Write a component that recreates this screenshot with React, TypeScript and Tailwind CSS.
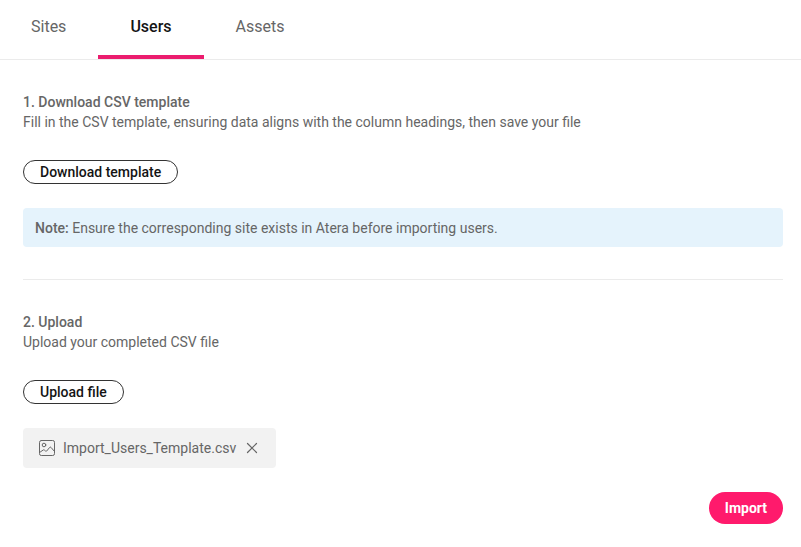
import { useState } from "react";

const TABS = ["Sites", "Users", "Assets"];

function ImageIcon() {
  return (
    <svg
      width="16"
      height="16"
      viewBox="0 0 16 16"
      fill="none"
      stroke="currentColor"
      strokeLinecap="round"
      strokeLinejoin="round"
      aria-hidden="true"
    >
      <rect x="0.5" y="0.5" width="15" height="15" rx="1.8" />
      <circle cx="5" cy="5" r="1.8" />
      <path d="M1 12.2l3.2-2.2a1 1 0 0 1 1.1 0l1.3 1.1a.8.8 0 0 0 1.1-.1l3-3.6a.9.9 0 0 1 1.3 0l3.6 4.2" />
    </svg>
  );
}

function OutlineButton({ children }: { children: string }) {
  return (
    <button
      type="button"
      className="h-6 rounded-full border border-[#333333] bg-white px-4 text-sm leading-5 font-medium text-[#141414] hover:bg-gray-50"
    >
      {children}
    </button>
  );
}

export default function App() {
  const [active, setActive] = useState("Users");
  const [file, setFile] = useState<string | null>("Import_Users_Template.csv");

  return (
    <div className="bg-white font-[Roboto,sans-serif] text-sm leading-5 text-[#666666]">
      <nav className="border-b border-[#ebebeb]">
        <div role="tablist" className="-ml-px flex">
          {TABS.map((tab) => (
            <button
              key={tab}
              type="button"
              role="tab"
              aria-selected={tab === active}
              onClick={() => setActive(tab)}
              className={
                tab === active
                  ? "h-[59px] border-b-4 border-[#eb1c6e] px-8 pb-[2px] text-base font-medium text-[#141414]"
                  : "h-[59px] border-b-4 border-transparent px-8 pb-[2px] text-base"
              }
            >
              {tab}
            </button>
          ))}
        </div>
      </nav>

      <main className="flex flex-col items-start pt-8 pr-[18px] pl-[23px]">
        <h2 className="font-medium">1. Download CSV template</h2>
        <p className="mb-7">
          Fill in the CSV template, ensuring data aligns with the column headings, then save your file
        </p>
        <OutlineButton>Download template</OutlineButton>
        <p className="mt-6 w-full rounded-sm bg-[#e5f3fc] px-3 pt-[10px] pb-[9px]">
          <strong className="font-medium">Note:</strong> Ensure the corresponding site exists in Atera before importing users.
        </p>

        <hr className="my-8 w-full border-[#ebebeb]" />

        <h2 className="font-medium">2. Upload</h2>
        <p className="mb-7">Upload your completed CSV file</p>
        <OutlineButton>Upload file</OutlineButton>
        {file && (
          <div className="mt-6 flex h-10 items-center rounded-sm bg-[#f2f2f2] px-4">
            <ImageIcon />
            <span className="mr-2 ml-2">{file}</span>
            <button type="button" aria-label="Remove file" onClick={() => setFile(null)}>
              <svg width="16" height="16" viewBox="0 0 16 16" fill="none" stroke="currentColor" strokeWidth="1.2" strokeLinecap="round">
                <path d="M3.5 3.5l9 9M12.5 3.5l-9 9" />
              </svg>
            </button>
          </div>
        )}
        <button
          type="button"
          className="mt-6 h-8 self-end rounded-full bg-[#ff1a6c] px-4 font-bold text-white hover:bg-[#e6125d]"
        >
          Import
        </button>
      </main>
    </div>
  );
}
